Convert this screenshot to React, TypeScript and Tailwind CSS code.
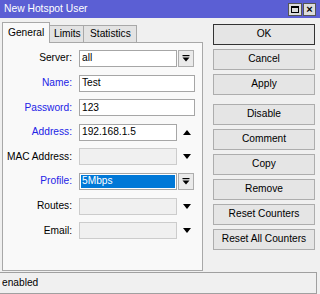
import React from 'react'

const font = { fontFamily: '"Liberation Sans", Arial, sans-serif' }

function DropIcon() {
  return (
    <svg width="8" height="7" viewBox="0 0 8 7">
      <rect x="0.5" y="0" width="7" height="1.2" fill="#000" />
      <polygon points="0.5,2.5 7.5,2.5 4,6.5" fill="#000" />
    </svg>
  )
}

function Tri({ up }: { up?: boolean }) {
  return (
    <svg width="8" height="5" viewBox="0 0 8 5">
      <polygon points={up ? '0,5 8,5 4,0' : '0,0 8,0 4,5'} fill="#000" />
    </svg>
  )
}

type Row = {
  label: string
  blue?: boolean
  value?: string
  kind: 'drop' | 'plain' | 'up' | 'down' | 'select'
  disabled?: boolean
}

const ROWS: Row[] = [
  { label: 'Server:', value: 'all', kind: 'drop' },
  { label: 'Name:', blue: true, value: 'Test', kind: 'plain' },
  { label: 'Password:', blue: true, value: '123', kind: 'plain' },
  { label: 'Address:', blue: true, value: '192.168.1.5', kind: 'up' },
  { label: 'MAC Address:', kind: 'down', disabled: true },
  { label: 'Profile:', blue: true, value: '5Mbps', kind: 'select' },
  { label: 'Routes:', kind: 'down', disabled: true },
  { label: 'Email:', kind: 'down', disabled: true },
]

function Field({ row }: { row: Row }) {
  const box = row.disabled
    ? 'bg-[#f0f0f0] border-[#cccccc]'
    : 'bg-white border-[#a6a6a6]'
  if (row.kind === 'plain') {
    return (
      <div className={`w-[116px] h-[17px] border ${box} flex items-center pl-[2px]`}>
        {row.value}
      </div>
    )
  }
  return (
    <div className="w-[116px] h-[17px] flex">
      <div className={`w-[98px] h-[17px] border ${box} flex items-center ${row.kind === 'select' ? 'p-px' : 'pl-[2px]'}`}>
        {row.kind === 'select' ? (
          <div className="w-full h-full bg-[#0078d7] text-white flex items-center pl-[1px]">{row.value}</div>
        ) : (
          row.value
        )}
      </div>
      {row.kind === 'drop' || row.kind === 'select' ? (
        <div className="ml-[1px] w-[16px] h-[17px] border border-[#adadad] bg-[#eaeaea] flex items-center justify-center">
          <DropIcon />
        </div>
      ) : (
        <div className="ml-[1px] w-[17px] h-[17px] flex items-center justify-center">
          <Tri up={row.kind === 'up'} />
        </div>
      )}
    </div>
  )
}

function Btn({ label, primary }: { label: string; primary?: boolean }) {
  return (
    <div
      className={`h-[21px] w-[102px] flex items-center justify-center bg-[#e5e5e5] border ${
        primary ? 'border-[#333333]' : 'border-[#adadad]'
      }`}
    >
      {label}
    </div>
  )
}

export default function App() {
  return (
    <div className="w-[320px] h-[294px] bg-[#f0f0f0] overflow-hidden text-[10.2px] text-black leading-none" style={font}>
      <div className="h-[18px] bg-[#5b5fd4] flex items-center justify-between pl-[4px] pr-[4px]">
        <span className="text-white text-[10.3px]">New Hotspot User</span>
        <div className="flex gap-[1px]">
          <div className="w-[14px] h-[13px] bg-[#dcdcdc] border border-[#555] flex items-center justify-center">
            <div className="w-[8px] h-[7px] border border-black border-t-2" />
          </div>
          <div className="w-[13px] h-[13px] bg-[#dcdcdc] border border-[#555] flex items-center justify-center text-[11px] font-bold">
            ×
          </div>
        </div>
      </div>

      <div className="flex h-[254px]">
        <div className="ml-[2px] w-[201px] pt-[4px] flex flex-col">
          <div className="flex items-end h-[21px] -mb-px relative z-10">
            <div className="w-[48px] h-[21px] bg-[#f9f9f9] border border-b-0 border-[#a8a8a8] flex items-start pt-[5px] pl-[5px]">
              General
            </div>
            <div className="w-[34px] h-[18px] bg-[#e3e3e3] border border-l-0 border-[#a8a8a8] flex items-center pl-[4px]">
              Limits
            </div>
            <div className="w-[53px] h-[18px] bg-[#e3e3e3] border border-l-0 border-[#a8a8a8] flex items-center pl-[6px]">
              Statistics
            </div>
          </div>
          <div className="h-[229px] bg-[#f9f9f9] border border-[#a8a8a8] pt-[7px] flex flex-col gap-[7.6px]">
            {ROWS.map((r) => (
              <div key={r.label} className="flex items-center h-[17px]">
                <div className={`w-[69px] text-right ${r.blue ? 'text-[#2323e6]' : 'text-black'}`}>{r.label}</div>
                <div className="ml-[7px]">
                  <Field row={r} />
                </div>
              </div>
            ))}
          </div>
        </div>

        <div className="ml-[10px] pt-[6px] flex flex-col">
          <div className="flex flex-col gap-[4px]">
            <Btn label="OK" primary />
            <Btn label="Cancel" />
            <Btn label="Apply" />
          </div>
          <div className="flex flex-col gap-[4px] mt-[9px]">
            <Btn label="Disable" />
            <Btn label="Comment" />
            <Btn label="Copy" />
            <Btn label="Remove" />
            <Btn label="Reset Counters" />
            <Btn label="Reset All Counters" />
          </div>
        </div>
      </div>

      <div className="w-[317px] h-[22px] border border-l-0 border-[#a0a0a0] flex items-center pl-[2px]">
        enabled
      </div>
    </div>
  )
}
